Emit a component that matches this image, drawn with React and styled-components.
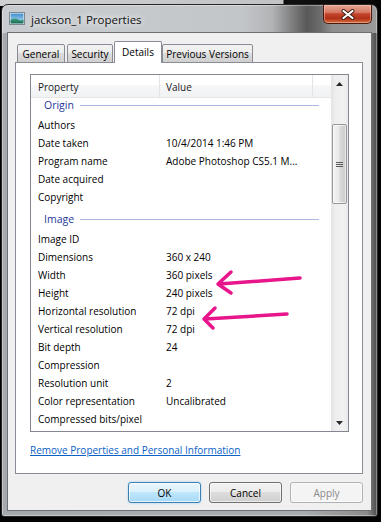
import React from 'react';
import styled, { createGlobalStyle } from 'styled-components';

const Global = createGlobalStyle`
  html, body { margin: 0; padding: 0; }
  body {
    width: 381px;
    height: 522px;
    overflow: hidden;
    background:
      linear-gradient(90deg, #cfd0d1 0, #c2c3c4 283px, #0c0c0c 284px, #111 290px, #050505 100%) top left / 100% 6px no-repeat,
      #030303;
    font-family: "Open Sans", "Liberation Sans", sans-serif;
  }
`;

const Screen = styled.div`
  position: relative;
  width: 381px;
  height: 522px;
  box-sizing: border-box;
  padding: 4px 0 0 1px;
`;

const Window = styled.div`
  width: 377px;
  height: 513px;
  box-sizing: border-box;
  border: 1px solid #262626;
  border-radius: 7px 7px 3px 3px;
  padding: 0 5px 5px 5px;
  display: flex;
  flex-direction: column;
  background:
    linear-gradient(90deg, #c8ccd0 0px, #c3c6c9 240px, #b2b4b6 270px, #7a7a7a 292px, #585858 305px, #6c6c6c 318px, #8e8e8e 330px, #9a9a9a 100%) top left / 100% 28px no-repeat,
    linear-gradient(90deg, #a6aaae 0px, #a9acaf 300px, #8c8c8c 365px, #4a4a4a 100%);
  box-shadow: inset 0 0 0 1px rgba(255, 255, 255, 0.35);
`;

const TitleBar = styled.div`
  height: 27px;
  display: flex;
  align-items: center;
  flex-shrink: 0;
`;

const TitleIcon = styled.svg`
  margin-left: 2px;
  flex-shrink: 0;
`;

const TitleText = styled.div`
  margin-left: 6px;
  margin-top: 2px;
  font-size: 11.5px;
  color: #101010;
  text-shadow: 0 0 6px #ffffff, 0 0 10px rgba(255, 255, 255, 0.8);
  white-space: nowrap;
`;

const CloseButton = styled.div`
  margin-left: auto;
  align-self: flex-start;
  width: 49px;
  height: 19px;
  box-sizing: border-box;
  border: 1px solid #4a1a12;
  border-top: none;
  border-radius: 0 0 5px 5px;
  background: linear-gradient(#e6a595 0%, #d77b66 40%, #c1412a 50%, #b23219 75%, #d8703f 100%);
  box-shadow: inset 0 0 0 1px rgba(255, 210, 190, 0.45);
  display: flex;
  align-items: center;
  justify-content: center;
`;

const Client = styled.div`
  flex: 1;
  box-sizing: border-box;
  border: 1px solid #6c7074;
  background: #f0f0f0;
  padding: 8px 8px 7px 7px;
  display: flex;
  flex-direction: column;
`;

const TabStrip = styled.div`
  height: 22px;
  display: flex;
  align-items: flex-end;
  padding-left: 2px;
  margin-bottom: -1px;
  position: relative;
  z-index: 1;
`;

const Tab = styled.div`
  width: ${(p) => p.$w}px;
  height: ${(p) => (p.$active ? 22 : 19)}px;
  margin-left: ${(p) => p.$ml || 0}px;
  box-sizing: border-box;
  border: 1px solid #898c95;
  border-bottom: ${(p) => (p.$active ? 'none' : '1px solid #898c95')};
  border-radius: 2px 2px 0 0;
  background: ${(p) =>
    p.$active ? '#ffffff' : 'linear-gradient(#f3f3f3, #ebebeb 50%, #dddddd 50%, #cfcfcf)'};
  font-size: 10px;
  color: #000;
  display: flex;
  align-items: center;
  justify-content: center;
  padding-bottom: ${(p) => (p.$active ? 2 : 0)}px;
  white-space: nowrap;
`;

const Panel = styled.div`
  height: 412px;
  box-sizing: border-box;
  border: 1px solid #898c95;
  background: #ffffff;
  padding: 11px 13px 0 14px;
  display: flex;
  flex-direction: column;
  flex-shrink: 0;
`;

const ListView = styled.div`
  height: 358px;
  box-sizing: border-box;
  border: 1px solid #828790;
  display: flex;
  flex-shrink: 0;
`;

const ListMain = styled.div`
  flex: 1;
  display: flex;
  flex-direction: column;
  overflow: hidden;
  min-width: 0;
`;

const Header = styled.div`
  height: 23px;
  box-sizing: border-box;
  display: flex;
  border-bottom: 1px solid #e6e6e6;
  background: linear-gradient(#ffffff, #ffffff 45%, #f6f7f9 45%, #f1f2f4);
  position: relative;
  z-index: 1;
  flex-shrink: 0;
`;

const HeaderCell = styled.div`
  width: ${(p) => (p.$w ? `${p.$w}px` : 'auto')};
  flex: ${(p) => (p.$w ? '0 0 auto' : '1')};
  box-sizing: border-box;
  border-right: ${(p) => (p.$w ? '1px solid #e3e4e6' : 'none')};
  padding-left: ${(p) => p.$pl || 0}px;
  padding-top: 2px;
  display: flex;
  align-items: center;
  font-size: 10px;
  color: #1a1a1a;
`;

const Body = styled.div`
  flex: 1;
  overflow: hidden;
`;

const Group = styled.div`
  height: 24px;
  box-sizing: border-box;
  padding: 2px 0 0 13px;
  margin-top: ${(p) => p.$mt || 0}px;
  display: flex;
  align-items: center;
  font-size: 10.5px;
  color: #1e3898;
`;

const GroupLine = styled.div`
  flex: 1;
  height: 1px;
  background: #a9b9e0;
  margin: 0 12px 0 6px;
`;

const Row = styled.div`
  height: 18px;
  display: flex;
  align-items: center;
  font-size: 10px;
  color: #000;
  white-space: nowrap;
`;

const NameCell = styled.div`
  width: 129px;
  flex-shrink: 0;
  box-sizing: border-box;
  padding-left: 7px;
`;

const ValueCell = styled.div`
  padding-left: 6px;
`;

const ScrollBar = styled.div`
  width: 17px;
  flex-shrink: 0;
  display: flex;
  flex-direction: column;
  background: linear-gradient(90deg, #e3e3e3, #eeeeee 25%, #f1f1f1 75%, #e9e9e9);
`;

const ArrowButton = styled.div`
  height: 17px;
  display: flex;
  align-items: center;
  justify-content: center;
  flex-shrink: 0;
`;

const TrackSpace = styled.div`
  height: ${(p) => (p.$h ? `${p.$h}px` : 'auto')};
  flex: ${(p) => (p.$h ? '0 0 auto' : '1')};
`;

const Thumb = styled.div`
  height: 80px;
  margin: 0 1px;
  box-sizing: border-box;
  border: 1px solid #979797;
  border-radius: 2px;
  background: linear-gradient(90deg, #f4f4f4, #e8e8e8 45%, #d9d9d9 55%, #cacaca);
  box-shadow: inset 0 0 0 1px rgba(255, 255, 255, 0.6);
  display: flex;
  align-items: center;
  justify-content: center;
  flex-shrink: 0;
`;

const Link = styled.a`
  margin-top: 11px;
  font-size: 10px;
  line-height: 14px;
  color: #0a62c6;
  text-decoration: underline;
  align-self: flex-start;
  white-space: nowrap;
  cursor: pointer;
`;

const ButtonRow = styled.div`
  margin-top: 8px;
  display: flex;
  justify-content: flex-end;
  gap: 8px;
`;

const Button = styled.div`
  width: 73px;
  height: 21px;
  box-sizing: border-box;
  border-radius: 3px;
  border: 1px solid ${(p) => (p.$default ? '#3c7fb1' : p.$disabled ? '#adb2b5' : '#707070')};
  background: ${(p) =>
    p.$default
      ? 'linear-gradient(#eaf6fd, #d9f0fc 50%, #bee6fd 50%, #a7d9f5)'
      : p.$disabled
      ? '#f4f4f4'
      : 'linear-gradient(#f2f2f2, #ebebeb 50%, #dddddd 50%, #cfcfcf)'};
  box-shadow: ${(p) =>
    p.$default ? 'inset 0 0 0 1px rgba(255,255,255,0.7), 0 0 2px rgba(80,180,240,0.6)' : 'inset 0 0 0 1px rgba(255,255,255,0.6)'};
  color: ${(p) => (p.$disabled ? '#8a8a8a' : '#000')};
  font-size: 10px;
  display: flex;
  align-items: center;
  justify-content: center;
`;

const Overlay = styled.svg`
  position: absolute;
  left: 0;
  top: 0;
  pointer-events: none;
`;

const origin = [
  ['Authors', ''],
  ['Date taken', '10/4/2014 1:46 PM'],
  ['Program name', 'Adobe Photoshop CS5.1 M...'],
  ['Date acquired', ''],
  ['Copyright', ''],
];

const image = [
  ['Image ID', ''],
  ['Dimensions', '360 x 240'],
  ['Width', '360 pixels'],
  ['Height', '240 pixels'],
  ['Horizontal resolution', '72 dpi'],
  ['Vertical resolution', '72 dpi'],
  ['Bit depth', '24'],
  ['Compression', ''],
  ['Resolution unit', '2'],
  ['Color representation', 'Uncalibrated'],
  ['Compressed bits/pixel', ''],
];

function PropRow({ name, value }) {
  return (
    <Row>
      <NameCell>{name}</NameCell>
      <ValueCell>{value}</ValueCell>
    </Row>
  );
}

export default function App() {
  return (
    <>
      <Global />
      <Screen>
        <Window>
          <TitleBar>
            <TitleIcon width="16" height="13" viewBox="0 0 16 13">
              <defs>
                <linearGradient id="sky" x1="0" y1="0" x2="0" y2="1">
                  <stop offset="0" stopColor="#3f8fd0" />
                  <stop offset="1" stopColor="#bfe0f4" />
                </linearGradient>
                <linearGradient id="hill" x1="0" y1="0" x2="0" y2="1">
                  <stop offset="0" stopColor="#3aa07a" />
                  <stop offset="1" stopColor="#1d6a57" />
                </linearGradient>
              </defs>
              <rect x="0.5" y="0.5" width="15" height="12" fill="#fff" stroke="#7d8790" />
              <rect x="1.5" y="1.5" width="13" height="10" fill="url(#sky)" />
              <path d="M1.5 8 Q5 5.5 9 7.5 T14.5 7 V11.5 H1.5 Z" fill="url(#hill)" />
            </TitleIcon>
            <TitleText>jackson_1 Properties</TitleText>
            <CloseButton>
              <svg width="14" height="11" viewBox="0 0 14 11">
                <path d="M2.5 2 L11.5 9 M11.5 2 L2.5 9" stroke="#3a1a14" strokeWidth="4" strokeLinecap="round" />
                <path d="M2.5 2 L11.5 9 M11.5 2 L2.5 9" stroke="#ffffff" strokeWidth="2.2" strokeLinecap="round" />
              </svg>
            </CloseButton>
          </TitleBar>
          <Client>
            <TabStrip>
              <Tab $w={48}>General</Tab>
              <Tab $w={46} $ml={2}>Security</Tab>
              <Tab $w={48} $ml={1} $active>Details</Tab>
              <Tab $w={91}>Previous Versions</Tab>
            </TabStrip>
            <Panel>
              <ListView>
                <ListMain>
                  <Header>
                    <HeaderCell $w={129} $pl={7}>Property</HeaderCell>
                    <HeaderCell $w={153} $pl={6}>Value</HeaderCell>
                    <HeaderCell />
                  </Header>
                  <Body>
                    <Group $mt={-6}>
                      Origin
                      <GroupLine />
                    </Group>
                    {origin.map(([n, v]) => (
                      <PropRow key={n} name={n} value={v} />
                    ))}
                    <Group>
                      Image
                      <GroupLine />
                    </Group>
                    {image.map(([n, v]) => (
                      <PropRow key={n} name={n} value={v} />
                    ))}
                  </Body>
                </ListMain>
                <ScrollBar>
                  <ArrowButton>
                    <svg width="7" height="4" viewBox="0 0 7 4">
                      <polygon points="3.5,0 7,4 0,4" fill="#2a2a2a" />
                    </svg>
                  </ArrowButton>
                  <TrackSpace $h={32} />
                  <Thumb>
                    <svg width="7" height="7" viewBox="0 0 7 7">
                      <path d="M0 1.5 H7 M0 3.5 H7 M0 5.5 H7" stroke="#5a5a5a" strokeWidth="1" />
                    </svg>
                  </Thumb>
                  <TrackSpace />
                  <ArrowButton>
                    <svg width="7" height="4" viewBox="0 0 7 4">
                      <polygon points="0,0 7,0 3.5,4" fill="#2a2a2a" />
                    </svg>
                  </ArrowButton>
                </ScrollBar>
              </ListView>
              <Link>Remove Properties and Personal Information</Link>
            </Panel>
            <ButtonRow>
              <Button $default>OK</Button>
              <Button>Cancel</Button>
              <Button $disabled>Apply</Button>
            </ButtonRow>
          </Client>
        </Window>
        <Overlay width="381" height="522" viewBox="0 0 381 522">
          <g stroke="#e8158b" strokeWidth="3.5" strokeLinecap="round" strokeLinejoin="round" fill="none">
            <path d="M300 278 L219 284" />
            <path d="M231 272 L218 284 L231 293" />
            <path d="M287 314 L205 319" />
            <path d="M215 308 L204 319 L213 328" />
          </g>
        </Overlay>
      </Screen>
    </>
  );
}
